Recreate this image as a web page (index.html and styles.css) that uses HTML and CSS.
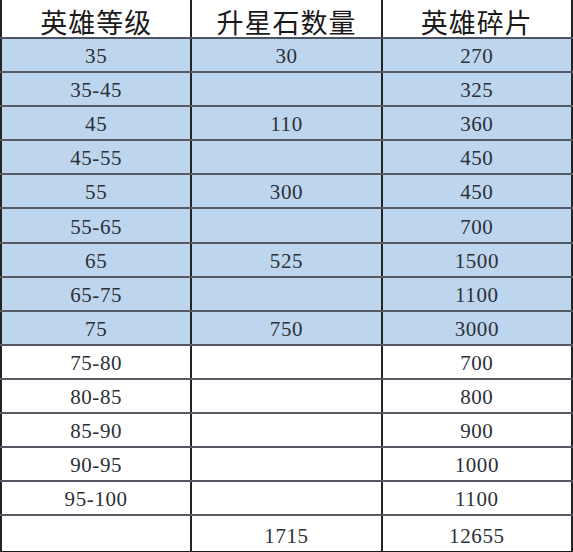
FILE: index.html
```html
<!DOCTYPE html>
<html lang="zh-CN">
<head>
<meta charset="utf-8">
<title>英雄升星表</title>
<link rel="stylesheet" href="styles.css">
</head>
<body>
<table class="sheet">
  <thead>
    <tr><th>英雄等级</th><th>升星石数量</th><th>英雄碎片</th></tr>
  </thead>
  <tbody>
    <tr class="blue"><td>35</td><td>30</td><td>270</td></tr>
    <tr class="blue"><td>35-45</td><td></td><td>325</td></tr>
    <tr class="blue"><td>45</td><td>110</td><td>360</td></tr>
    <tr class="blue"><td>45-55</td><td></td><td>450</td></tr>
    <tr class="blue"><td>55</td><td>300</td><td>450</td></tr>
    <tr class="blue"><td>55-65</td><td></td><td>700</td></tr>
    <tr class="blue"><td>65</td><td>525</td><td>1500</td></tr>
    <tr class="blue"><td>65-75</td><td></td><td>1100</td></tr>
    <tr class="blue"><td>75</td><td>750</td><td>3000</td></tr>
    <tr><td>75-80</td><td></td><td>700</td></tr>
    <tr><td>80-85</td><td></td><td>800</td></tr>
    <tr><td>85-90</td><td></td><td>900</td></tr>
    <tr><td>90-95</td><td></td><td>1000</td></tr>
    <tr><td>95-100</td><td></td><td>1100</td></tr>
    <tr class="total"><td></td><td>1715</td><td>12655</td></tr>
  </tbody>
</table>
</body>
</html>
```

FILE: styles.css
```css
html, body {
  margin: 0;
  padding: 0;
  background: #ffffff;
}

.sheet {
  width: 573px;
  border-collapse: collapse;
  table-layout: fixed;
  border-left: 2px solid #1a1a1a;
  border-right: 2px solid #1a1a1a;
  border-bottom: 2px solid #1a1a1a;
}

.sheet th,
.sheet td {
  padding: 0;
  text-align: center;
  vertical-align: middle;
  border-left: 2px solid #222428;
  border-right: 2px solid #222428;
}

.sheet th {
  height: 30px;
  padding-top: 7px;
  font-family: "Noto Sans CJK SC", "Noto Sans", sans-serif;
  font-weight: 400;
  font-size: 27px;
  line-height: 30px;
  letter-spacing: 1px;
  color: #1a1a1a;
  border-bottom: 2px solid #4d5563;
}

.sheet td {
  height: 30.1px;
  padding-top: 2px;
  font-family: "Liberation Serif", "DejaVu Serif", serif;
  font-size: 21px;
  line-height: 30px;
  letter-spacing: 0.6px;
  color: #2c3038;
  border-bottom: 2px solid #555a63;
}

.sheet tr.blue td {
  background: #bdd6ee;
}

.sheet tr.total td {
  padding-top: 5px;
  height: 27.1px;
  border-bottom: 2px solid #1a1a1a;
}
```
